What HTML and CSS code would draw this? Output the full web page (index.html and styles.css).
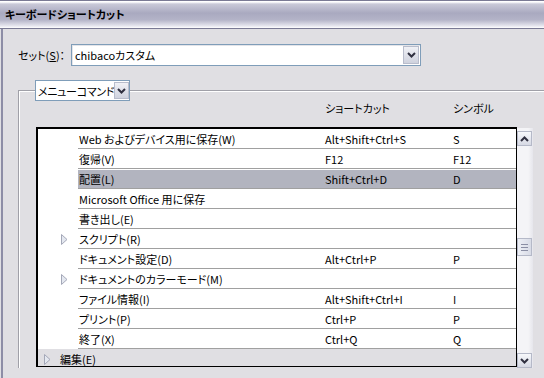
FILE: index.html
```html
<!DOCTYPE html>
<html lang="ja">

<head>
  <meta charset="UTF-8">
  <title>キーボードショートカット</title>
  <link rel="stylesheet" href="styles.css">
</head>

<body>

  <div class="titlebar">キーボードショートカット</div>

  <div class="main">
    <!-- Set selector -->
    <div class="set-row">
      <label class="set-label">セット(<u>S</u>)：</label>
      <div class="combo">
        <span class="combo-text">chibacoカスタム</span>
        <span class="drop-btn">
          <svg width="9" height="6" viewBox="0 0 9 6"><polyline points="1,1 4.5,4.5 8,1" fill="none" stroke="#303040" stroke-width="2"/></svg>
        </span>
      </div>
    </div>

    <fieldset class="group">
      <legend class="group-select">
        <span class="sel-text">メニューコマンド</span>
        <span class="drop-btn small">
          <svg width="9" height="6" viewBox="0 0 9 6"><polyline points="1,1 4.5,4.5 8,1" fill="none" stroke="#303040" stroke-width="2"/></svg>
        </span>
      </legend>

      <div class="heads">
        <span class="head-key">ショートカット</span>
        <span class="head-sym">シンボル</span>
      </div>

      <div class="list-wrap">
        <div class="list">
          <div class="row"><span class="tw"></span><div class="cells"><span>Web およびデバイス用に保存(W)</span><span>Alt+Shift+Ctrl+S</span><span>S</span></div></div>
          <div class="row"><span class="tw"></span><div class="cells"><span>復帰(V)</span><span>F12</span><span>F12</span></div></div>
          <div class="row"><span class="tw"></span><div class="cells selected"><span>配置(L)</span><span>Shift+Ctrl+D</span><span>D</span></div></div>
          <div class="row"><span class="tw"></span><div class="cells"><span>Microsoft Office 用に保存</span><span></span><span></span></div></div>
          <div class="row"><span class="tw"></span><div class="cells"><span>書き出し(E)</span><span></span><span></span></div></div>
          <div class="row"><span class="tw"><svg width="7" height="11" viewBox="0 0 7 11"><polygon points="0.5,0.5 6,5.5 0.5,10.5" fill="#e4e8f0" stroke="#a4a8b8"/></svg></span><div class="cells"><span>スクリプト(R)</span><span></span><span></span></div></div>
          <div class="row"><span class="tw"></span><div class="cells"><span>ドキュメント設定(D)</span><span>Alt+Ctrl+P</span><span>P</span></div></div>
          <div class="row"><span class="tw"><svg width="7" height="11" viewBox="0 0 7 11"><polygon points="0.5,0.5 6,5.5 0.5,10.5" fill="#e4e8f0" stroke="#a4a8b8"/></svg></span><div class="cells"><span>ドキュメントのカラーモード(M)</span><span></span><span></span></div></div>
          <div class="row"><span class="tw"></span><div class="cells"><span>ファイル情報(I)</span><span>Alt+Shift+Ctrl+I</span><span>I</span></div></div>
          <div class="row"><span class="tw"></span><div class="cells"><span>プリント(P)</span><span>Ctrl+P</span><span>P</span></div></div>
          <div class="row"><span class="tw"></span><div class="cells"><span>終了(X)</span><span>Ctrl+Q</span><span>Q</span></div></div>
          <!-- top level group -->
          <div class="group-row">
            <svg width="7" height="11" viewBox="0 0 7 11"><polygon points="0.5,0.5 6,5.5 0.5,10.5" fill="#e4e8f0" stroke="#a4a8b8"/></svg>
            <span>編集(E)</span>
          </div>
        </div>

        <div class="scrollbar">
          <span class="sb-btn">
            <svg width="9" height="6" viewBox="0 0 9 6"><polyline points="1,5 4.5,1.5 8,5" fill="none" stroke="#303040" stroke-width="2"/></svg>
          </span>
          <div class="sb-track">
            <span class="sb-thumb"><i></i><i></i><i></i></span>
          </div>
          <span class="sb-btn">
            <svg width="9" height="6" viewBox="0 0 9 6"><polyline points="1,1 4.5,4.5 8,1" fill="none" stroke="#303040" stroke-width="2"/></svg>
          </span>
        </div>
      </div>
    </fieldset>
  </div>

</body>

</html>
```

FILE: styles.css
```css
body {
  margin: 0;
  width: 544px;
  height: 378px;
  overflow: hidden;
  background-color: #e0dfe3;
  font-family: "Noto Sans CJK JP", "Liberation Sans", sans-serif;
  font-feature-settings: "palt";
  font-size: 11px;
  color: #000;
}

.titlebar {
  height: 27px;
  line-height: 27px;
  padding-left: 5px;
  font-weight: bold;
  border-top: 1px solid #7a7a94;
  border-bottom: 1px solid #7a7a94;
  background: linear-gradient(#ffffff 0, #ffffff 1px, #c9c9d8 3px, #a9a9c0 45%, #b4b4c8 70%, #e6e6ee 92%, #ffffff 100%);
}

.main {
  margin-left: 1px;
  border-left: 2px solid #8d8da6;
  height: 349px;
  overflow: hidden;
}

.set-row {
  display: flex;
  align-items: center;
  padding: 15px 0 0 15px;
}

.set-label {
  width: 53px;
}

.combo {
  display: flex;
  align-items: center;
  justify-content: space-between;
  box-sizing: border-box;
  width: 350px;
  height: 22px;
  border: 1px solid #7f9db9;
  background-color: #fff;
  box-shadow: inset 1px 1px #e4e4e8;
  padding: 0 1px 0 3px;
}

.drop-btn {
  display: flex;
  align-items: center;
  justify-content: center;
  flex-shrink: 0;
  box-sizing: border-box;
  width: 16px;
  height: 18px;
  border: 1px solid #b8bccb;
  background: linear-gradient(#f0f1f6, #cfd2de);
}

.drop-btn.small {
  width: 15px;
  height: 17px;
}

.group {
  margin: 14px 0 0 15px;
  padding: 0 0 0 16px;
  border: 0;
  border-top: 1px solid #a0a0a8;
  border-left: 1px solid #a0a0a8;
  box-shadow: inset 1px 1px #fff;
}

.group-select {
  display: flex;
  align-items: center;
  justify-content: space-between;
  box-sizing: border-box;
  width: 95px;
  height: 21px;
  padding: 0 1px 0 2px;
  border: 1px solid #7f9db9;
  background-color: #fff;
}

.sel-text {
  white-space: nowrap;
  letter-spacing: -0.3px;
}

.heads {
  display: flex;
  height: 14px;
  line-height: 14px;
  padding: 0 0 12px 290px;
}

.head-key {
  width: 128px;
}

.list-wrap {
  display: flex;
  margin-left: 1px;
}

.list {
  box-sizing: border-box;
  width: 481px;
  height: 240px;
  overflow: hidden;
  border: 2px solid #000;
  border-right-width: 1px;
  border-bottom-width: 1px;
  background-color: #fff;
}

.row {
  display: flex;
  height: 20px;
}

.tw {
  display: flex;
  align-items: center;
  justify-content: flex-end;
  width: 40px;
  padding-right: 10px;
  box-sizing: border-box;
}

.cells {
  flex: 1;
  display: grid;
  grid-template-columns: 246px 128px 1fr;
  align-items: center;
  border-bottom: 1px solid #a0a0a0;
  padding-left: 1px;
  white-space: nowrap;
}

.cells.selected {
  background-color: #b2b4bf;
  box-shadow: inset 0 1px #fff;
}

.group-row {
  display: flex;
  align-items: center;
  gap: 9px;
  height: 20px;
  padding-left: 6px;
  background-color: #e0dfe3;
}

.scrollbar {
  display: flex;
  flex-direction: column;
  width: 16px;
  height: 240px;
  margin-top: 1px;
  background: linear-gradient(90deg, #f4f4f7 70%, #e6e6ec);
}

.sb-btn {
  display: flex;
  align-items: center;
  justify-content: center;
  box-sizing: border-box;
  width: 15px;
  height: 15px;
  margin-top: 3px;
  border: 1px solid #b5b9c8;
  background: linear-gradient(#f7f8fb, #d6d9e4);
}

.sb-track {
  flex: 1;
  padding-top: 92px;
}

.sb-thumb {
  display: flex;
  flex-direction: column;
  align-items: center;
  justify-content: center;
  gap: 2px;
  box-sizing: border-box;
  width: 15px;
  height: 18px;
  border: 1px solid #b5b9c8;
  background: linear-gradient(90deg, #eef0f6, #d8dbe6);
}

.sb-thumb i {
  width: 7px;
  height: 1px;
  background-color: #8a8ea4;
}
```
